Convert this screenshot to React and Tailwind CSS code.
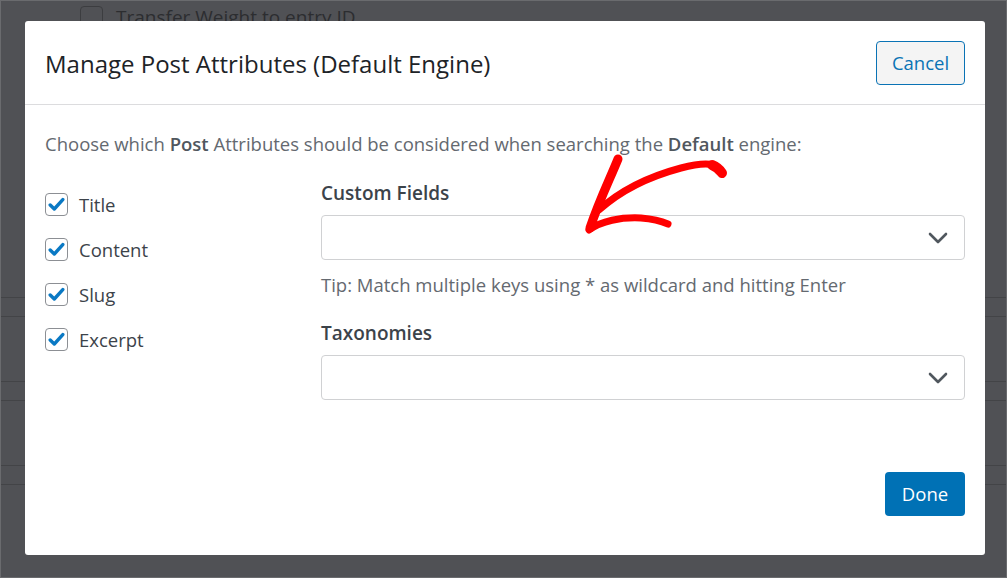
import React from "react";

function Check() {
  return (
    <span className="flex h-[23px] w-[23px] items-center justify-center rounded-[4px] border border-[#8c8f94] bg-white">
      <svg width="17" height="15" viewBox="0 0 17 15">
        <path d="M2.2 8 L6.3 12 L14.8 2.6" fill="none" stroke="#0a79c4" strokeWidth="3.4" strokeLinecap="round" strokeLinejoin="round" />
      </svg>
    </span>
  );
}

function Chevron() {
  return (
    <svg width="20" height="12" viewBox="0 0 20 12">
      <path d="M2 2 L10 10 L18 2" fill="none" stroke="#50575e" strokeWidth="2.6" strokeLinecap="round" strokeLinejoin="round" />
    </svg>
  );
}

function Select() {
  return (
    <div className="flex h-[45px] items-center justify-end rounded-[4px] border border-[#d0d1d3] bg-white pr-[16px]">
      <Chevron />
    </div>
  );
}

export default function App() {
  const font = { fontFamily: '"Open Sans", "Noto Sans", sans-serif' };
  return (
    <div className="relative h-[578px] w-[1007px] overflow-hidden border border-[#6a6b6e] bg-[#505155]" style={font}>
      {/* backdrop */}
      <div className="flex flex-col">
        <div className="flex h-[33px] items-center gap-[13px] pl-[79px]">
          <span className="h-[23px] w-[23px] rounded-[4px] border border-[#3c3d40]" />
          <span className="text-[19px] text-[#2c2d30]">Transfer Weight to entry ID</span>
        </div>
        <div className="mt-[263px] h-[1px] bg-[#434447]" />
        <div className="mt-[18px] h-[1px] bg-[#434447]" />
        <div className="mt-[64px] h-[1px] bg-[#434447]" />
        <div className="mt-[18px] h-[1px] bg-[#434447]" />
        <div className="mt-[64px] h-[1px] bg-[#434447]" />
        <div className="mt-[18px] h-[1px] bg-[#434447]" />
      </div>

      {/* modal */}
      <div className="absolute left-[24px] top-[20px] flex h-[534px] w-[960px] flex-col rounded-[3px] bg-white">
        <div className="flex h-[84px] items-center justify-between border-b border-[#dcdcde] px-[20px]">
          <h1 className="mt-[2px] text-[24px] leading-[30px] text-[#1d2327]">Manage Post Attributes (Default Engine)</h1>
          <button className="mt-[1px] h-[44px] w-[89px] rounded-[4px] border border-[#0a73b5] bg-[#f4f4f4] text-[18.5px] text-[#0a73b5]">
            Cancel
          </button>
        </div>
        <div className="flex flex-1 flex-col px-[20px] pt-[27px]">
          <p className="text-[18.5px] leading-[24px] text-[#646970]">
            Choose which <b className="font-semibold text-[#50575e]">Post</b> Attributes should be considered when searching the{" "}
            <b className="font-semibold text-[#50575e]">Default</b> engine:
          </p>
          <div className="mt-[25px] flex">
            <div className="flex w-[276px] flex-col pt-[1px]">
              {["Title", "Content", "Slug", "Excerpt"].map((l) => (
                <label key={l} className="flex h-[45px] items-center gap-[11px]">
                  <Check />
                  <span className="text-[18.5px] text-[#3c434a]">{l}</span>
                </label>
              ))}
            </div>
            <div className="flex flex-1 flex-col">
              <div className="text-[19px] font-semibold leading-[24px] text-[#3c434a]">Custom Fields</div>
              <div className="mt-[10px]"><Select /></div>
              <div className="mt-[13px] text-[18.5px] leading-[24px] text-[#646970]">
                Tip: Match multiple keys using * as wildcard and hitting Enter
              </div>
              <div className="mt-[24px] text-[19px] font-semibold leading-[24px] text-[#3c434a]">Taxonomies</div>
              <div className="mt-[10px]"><Select /></div>
            </div>
          </div>
          <div className="mt-auto flex justify-end pb-[39px]">
            <button className="h-[44px] w-[80px] rounded-[4px] bg-[#0071b5] text-[18.5px] text-white">Done</button>
          </div>
        </div>
      </div>

      {/* red arrow annotation */}
      <svg className="pointer-events-none absolute left-0 top-0" width="1007" height="578" viewBox="0 0 1007 578">
        <g fill="none" stroke="#ff0000" strokeLinecap="round" strokeLinejoin="round">
          <path d="M617 158 C608 180 598 200 589 227" strokeWidth="9" />
          <path d="M588 229 C600 220 620 216 640 217 C652 218 660 220 667 223" strokeWidth="7" />
          <path d="M598 209 C620 189 650 175 680 167 C695 163 706 162 713 164" strokeWidth="7" />
          <path d="M711 164 C716 166 719 169 721 172" strokeWidth="10" />
        </g>
      </svg>
    </div>
  );
}
